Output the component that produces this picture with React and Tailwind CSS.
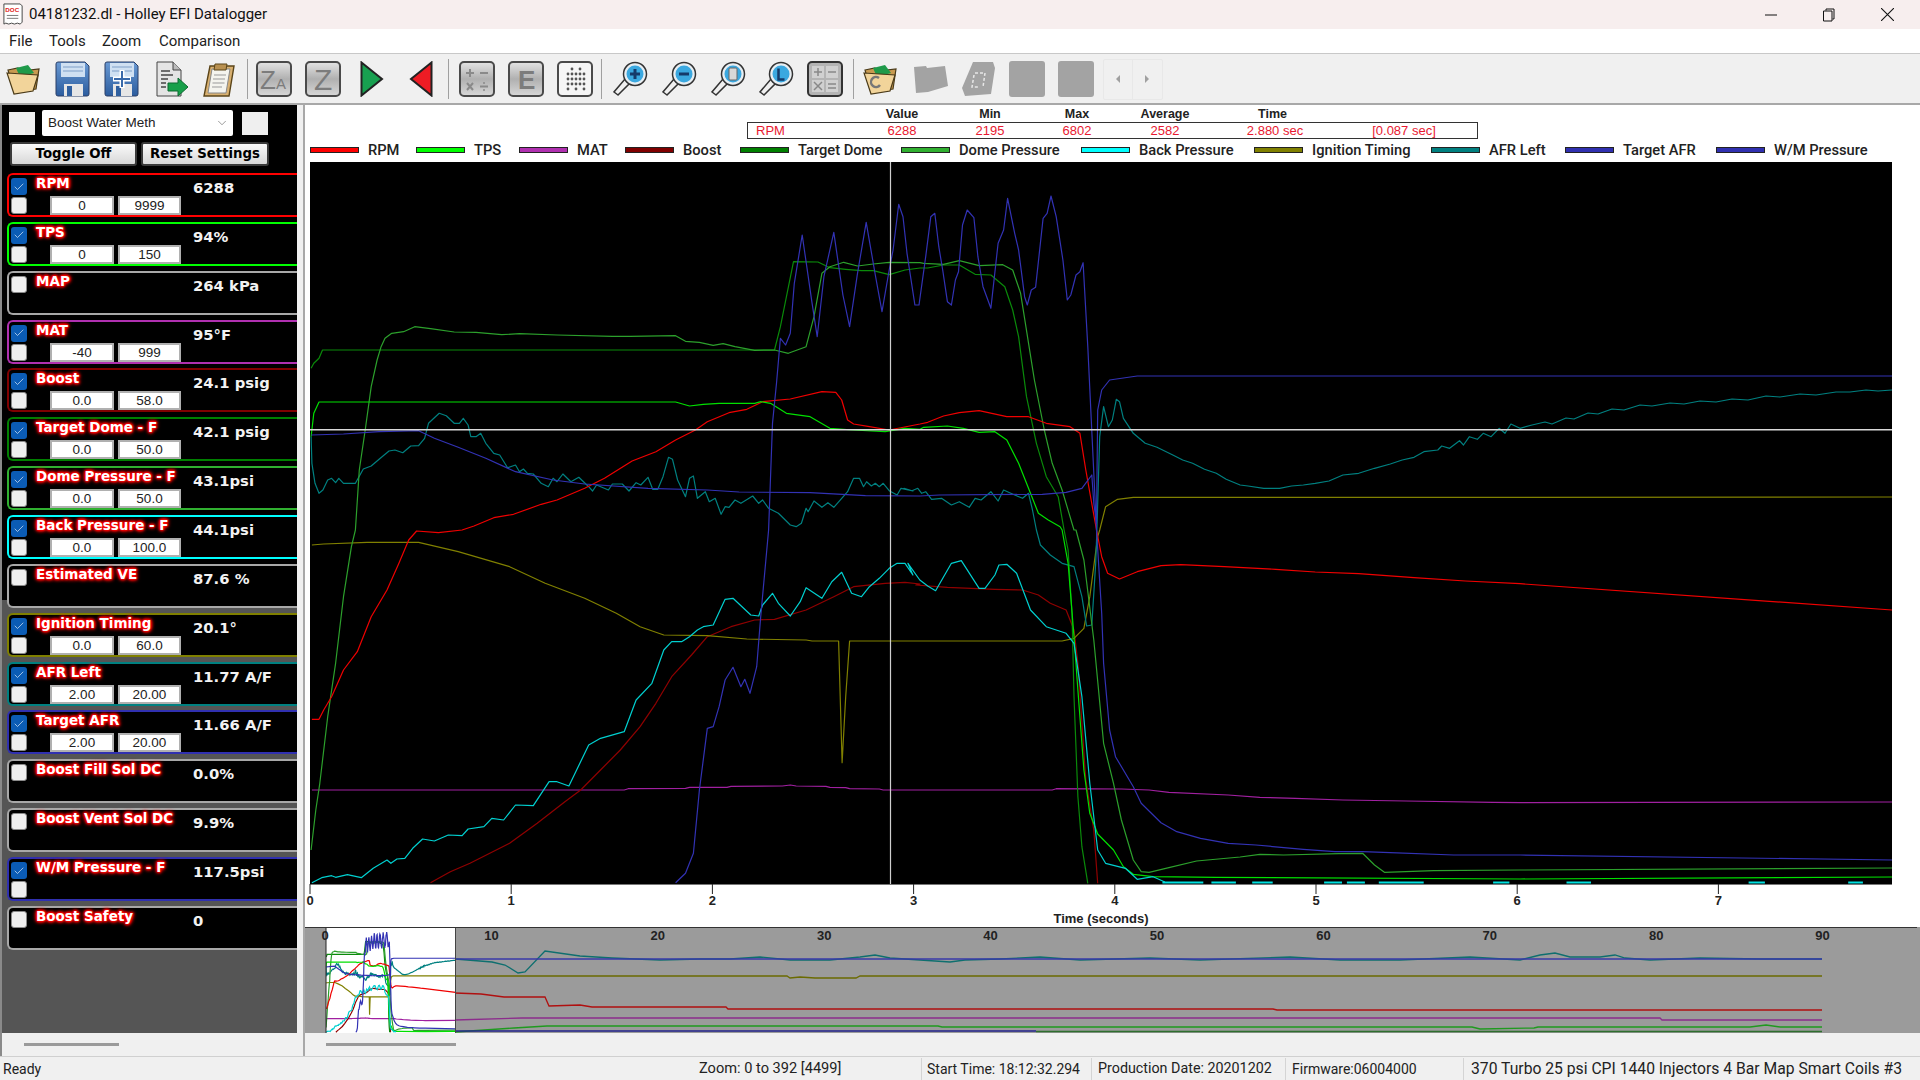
import React from "react";
import { ChevronDown, Check } from "lucide-react";

// zoomed trace coordinates -> page coordinates
const conv = (ox, oy, pts) => pts.map(([x, y]) => [ox + x / 2.529, oy + y / 3]);
const tl = (p) => conv(300, 170, p);
const tr = (p) => conv(900, 170, p);
const bl = (p) => conv(300, 530, p);
const br = (p) => conv(900, 530, p);
const toPts = (arr) => arr.map(([x, y]) => `${x.toFixed(1)},${y.toFixed(1)}`).join(" ");

const domePressure = [
  ...bl([[28,960],[40,840],[50,760],[70,560],[90,400],[110,200],[130,50],[140,0]]),
  ...tl([[150,900],[165,780],[180,650],[195,570],[205,530],[215,505],[232,490],[262,485],[290,470],[330,476],[390,486],[445,487],[510,494],[555,491],[650,495],[790,499],[835,499],[950,497],[975,514],[1010,517],[1045,526],[1070,521],[1100,530],[1150,541],[1200,540],[1235,550],[1280,530],[1300,440],[1320,310],[1340,290],[1375,277],[1410,288],[1450,282],[1490,277],[1568,278]]),
  ...tr([[60,280],[110,283],[150,272],[200,287],[260,284],[285,300],[305,370],[340,630],[365,780],[385,880],[410,960],[440,1080]]),
  ...br([[445,0],[465,90],[490,330],[515,640],[540,760],[560,870],[590,990],[610,1025],[630,1027],[680,1013],[750,993],[860,981],[910,973],[970,975],[1110,971],[1170,970],[1200,1005],[1225,1027],[1350,1022],[1568,1020]]),
  [1892,868],
];
const targetDome = [
  ...tl([[28,595],[35,580],[48,565],[57,540],[1130,540],[1200,540],[1215,470],[1248,275],[1310,276],[1340,293],[1380,298],[1420,302],[1450,302],[1490,314],[1530,300],[1568,294]]),
  ...tr([[70,294],[110,285],[150,285],[190,313],[230,315],[265,350],[285,420],[300,500],[320,680],[345,820],[370,920],[400,980],[415,1080]]),
  ...br([[425,60],[435,250],[440,500],[450,800],[460,950],[475,1060]]),
];
const tps = [
  ...tl([[28,800],[35,730],[48,696],[950,696],[985,708],[1020,703],[1060,700],[1150,700],[1165,695],[1190,700],[1230,730],[1290,740],[1340,775],[1400,780],[1480,785],[1530,775],[1568,778]]),
  ...tr([[60,772],[120,768],[160,775],[200,787],[240,785],[270,810],[300,880],[330,970],[350,1030],[375,1050],[405,1070],[410,1080]]),
  ...br([[425,100],[440,320],[450,480],[465,720],[480,850],[500,912],[540,960],[565,1010],[590,1033],[640,1040],[800,1042],[1568,1047]]),
  [1892,877],
];
const rpm = [
  ...bl([[30,568],[48,568],[60,540],[80,500],[110,420],[145,365],[180,260],[220,180],[250,100],[275,30],[295,3],[350,8],[410,0]]),
  ...tl([[440,1068],[490,1043],[540,1033],[610,1003],[650,990],[720,955],[770,925],[840,873],[900,845],[950,810],[1000,780],[1030,755],[1085,728],[1130,718],[1170,695],[1240,687],[1320,665],[1355,667],[1370,690],[1385,750],[1400,762],[1440,770],[1490,780],[1568,762]]),
  ...tr([[70,757],[110,738],[150,728],[200,722],[270,740],[325,740],[370,760],[430,770],[455,790],[470,900],[497,1080]]),
  ...br([[510,80],[525,130],[555,147],[600,125],[660,107],[710,104],[820,110],[950,118],[1050,126],[1160,131],[1300,143],[1430,153],[1568,161]]),
  [1892,610],
];
const boost = [
  ...bl([[330,1058],[380,1025],[430,1000],[530,940],[600,880],[670,815],[710,780],[760,720],[810,660],[860,590],[900,520],[940,440],[990,375],[1030,320],[1090,290],[1150,270],[1200,268],[1280,240],[1350,200],[1400,170],[1480,160],[1530,157],[1568,162]]),
  ...br([[40,165],[120,172],[240,178],[310,180],[350,195],[380,220],[420,240],[440,300],[450,400],[470,750],[490,900],[500,1060]]),
];
const backPressure = [
  ...bl([[30,1058],[55,1043],[80,1037],[90,1042],[120,1034],[155,1043],[185,1015],[220,990],[230,1000],[245,987],[265,985],[285,955],[310,927],[340,933],[375,915],[410,917],[425,897],[465,890],[485,865],[515,870],[545,825],[590,827],[630,755],[650,755],[680,768],[730,645],[760,625],[820,605],[850,510],[890,460],[920,360],[940,335],[965,335],[985,320],[1005,300],[1020,290],[1045,285],[1075,208],[1095,205],[1140,255],[1160,258],[1170,225],[1195,190],[1210,220],[1240,258],[1265,215],[1280,173],[1320,205],[1345,155],[1370,127],[1395,190],[1420,200],[1440,170],[1465,145],[1490,115],[1510,100],[1530,100],[1550,135]]),
  ...br([[20,100],[50,150],[70,168],[90,182],[130,100],[155,92],[200,175],[215,175],[240,135],[250,105],[270,103],[295,130],[330,240],[370,290],[420,310],[440,340],[460,500],[480,760],[500,960],[520,1000],[570,1015],[600,1048],[640,1040],[670,1056]]),
];
const backDashes = [[640,690],[700,730],[750,775],[838,860],[866,888],[905,960],[1045,1065],[1135,1165],[1358,1378],[1480,1498]].map(
  ([a, b]) => [[640 + a / 1.225, 882.5], [640 + b / 1.225, 882.5]]
);
const mat = [
  ...bl([[30,780],[820,780],[830,776],[975,775],[985,772],[1080,772],[1090,769],[1220,768],[1240,765],[1255,768],[1330,769],[1340,772],[1380,773],[1390,776],[1465,777],[1475,780],[1568,780]]),
  ...br([[385,780],[395,776],[560,777],[630,780],[680,787],[830,795],[910,802],[1000,805],[1120,810],[1280,813],[1500,817],[1568,818]]),
  [1892,802],
];
const wmPressure = [
  ...bl([[950,1058],[975,1030],[995,970],[1010,780],[1030,595],[1045,590],[1060,530],[1075,450],[1095,412],[1115,470],[1125,448],[1138,490],[1155,410],[1165,260],[1185,0]]),
  ...tl([[1195,760],[1205,640],[1215,505],[1228,525],[1240,490],[1250,340],[1270,195],[1295,400],[1308,500],[1325,320],[1350,187],[1373,375],[1390,470],[1410,310],[1432,157],[1455,315],[1472,425],[1490,300],[1500,240],[1514,103],[1525,140],[1535,250],[1555,405]]),
  ...tr([[48,405],[65,260],[78,140],[88,130],[98,230],[108,300],[120,395],[130,405],[140,330],[148,305],[158,165],[170,120],[187,143],[197,260],[210,350],[230,415],[248,220],[262,180],[272,85],[290,190],[300,240],[315,380],[322,405],[332,360],[343,352],[362,145],[372,130],[382,78],[395,140],[412,270],[423,390],[432,375],[445,315],[455,305],[463,278],[475,530],[497,1080]]),
  ...br([[510,250],[515,400],[530,600],[545,680],[590,770],[610,820],[660,878],[700,905],[760,925],[830,940],[900,945],[1020,958],[1100,965],[1170,965],[1240,968],[1400,975],[1568,975]]),
  [1892,860],
];
const targetAfr = [
  ...tl([[28,795],[110,792],[200,785],[300,782],[340,805],[400,832],[470,865],[545,905],[640,930],[720,942],[880,955],[1030,960],[1110,966],[1290,968],[1430,977],[1568,978]]),
  ...tr([[100,975],[360,973],[420,967],[460,955],[485,915],[490,1000],[497,1060],[500,720],[510,660],[530,630],[600,618],[1568,618]]),
  [1892,376],
];
const afrLeft = [
  ...tl([[28,800],[30,880],[38,940],[48,970],[58,960],[70,930],[80,925],[90,938],[98,925],[110,940],[140,940],[160,897],[180,888],[200,868],[225,843],[240,840],[260,848],[280,828],[300,827],[315,805],[325,760],[352,730],[370,737],[390,760],[403,760],[413,745],[425,765],[432,800],[445,800],[457,790],[470,820],[490,850],[505,855],[525,893],[545,885],[555,905],[565,897],[575,910],[590,912],[610,940],[628,950],[640,925],[650,935],[665,912],[685,935],[705,922],[730,950],[740,963],[750,945],[780,960],[790,942],[815,942],[832,963],[850,938],[862,945],[880,922],[892,958],[905,958],[918,920],[932,862],[942,868],[955,930],[975,980],[985,925],[995,918],[1005,985],[1025,965],[1035,995],[1050,985],[1065,1033],[1075,1010],[1085,1012],[1100,990],[1115,1000],[1145,978],[1160,1000],[1170,990],[1185,1015],[1210,1030],[1240,1065],[1255,1070],[1268,1060],[1280,1015],[1285,1025],[1300,993],[1320,1012],[1335,998],[1350,1012],[1370,985],[1385,965],[1400,925],[1415,925],[1425,950],[1433,935],[1445,948],[1455,940],[1465,950],[1475,940],[1490,962],[1510,975],[1520,955],[1550,963]]),
  ...tr([[10,955],[30,962],[45,955],[55,970],[65,965],[80,988],[105,985],[130,1005],[150,995],[175,1012],[190,985],[205,990],[230,965],[248,993],[262,960],[290,975],[310,985],[325,970],[335,1020],[345,1080]]),
  ...br([[355,45],[380,75],[410,100],[440,110],[460,200],[472,288],[485,285],[495,100],[498,0]]),
  ...tr([[505,800],[515,710],[527,770],[537,750],[547,688],[555,695],[565,745],[590,790],[620,820],[650,832],[690,855],[715,870],[740,880],[770,898],[800,910],[825,928],[860,945],[880,948],[920,955],[960,955],[990,948],[1020,945],[1050,940],[1085,933],[1120,915],[1160,910],[1200,895],[1240,882],[1270,870],[1300,862],[1325,845],[1360,840],[1370,828],[1390,835],[1415,812],[1425,825],[1440,800],[1460,808],[1475,790],[1495,800],[1515,775],[1530,790],[1545,762],[1568,775]]),
  [1532,425],[1545,422],[1552,424],[1566,418],[1574,419],[1588,413],[1598,414],[1612,409],[1624,410],[1640,405],[1652,406],[1670,403],[1684,404],[1700,401],[1716,402],[1732,399],[1748,400],[1766,396],[1780,397],[1800,394],[1816,395],[1836,392],[1850,392],[1866,390],[1878,391],[1892,390],
];
const ignition = [
  ...bl([[30,45],[60,42],[170,37],[300,37],[400,65],[530,110],[620,160],[720,205],[800,250],[860,290],[920,315],[1030,317],[1130,327],[1280,330],[1295,333],[1362,333],[1371,698],[1380,500],[1390,333],[1568,333]]),
  ...br([[410,333],[440,325],[465,295],[480,200],[500,20],[505,0]]),
  ...tr([[520,1010],[550,988],[590,982],[1568,982]]),
  [1892,497],
];

const traces = [
  [mat, "#a020a0"],
  [boost, "#900000"],
  [ignition, "#808000"],
  [afrLeft, "#008080"],
  [targetDome, "#0a8a0a"],
  [domePressure, "#2ca02c"],
  [rpm, "#f00000"],
  [tps, "#00e000"],
  [backPressure, "#00d0d0"],
  [targetAfr, "#3232b4"],
  [wmPressure, "#3232b4"],
];

// what the overview shows to the right of the highlighted window
const overviewTraces = [
  [[[455,959],[492,962],[505,965],[518,973],[525,972],[545,951],[580,956],[612,958],[660,960],[700,959],[730,959],[760,957],[790,960],[830,960],[860,957],[875,955],[890,958],[950,962],[965,960],[1000,959],[1040,957],[1080,960],[1150,958],[1200,960],[1290,957],[1340,960],[1400,960],[1470,957],[1520,960],[1540,955],[1555,953],[1570,957],[1600,957],[1615,955],[1625,958],[1650,960],[1700,958],[1760,959],[1822,959]], "#0e6f6f"],
  [[[455,959],[1822,959]], "#3838a8"],
  [[[455,976],[787,976],[790,978],[800,977],[815,978],[856,978],[860,976],[1822,976]], "#6b6b00"],
  [[[455,993],[481,994],[504,997],[545,997],[549,1006],[580,1005],[592,1007],[726,1007],[728,1009],[1273,1009],[1277,1010],[1822,1010]], "#b01010"],
  [[[455,1020],[522,1018],[1660,1018],[1662,1020],[1822,1020]], "#8c2c8c"],
  [[[455,1032],[514,1028],[547,1026],[938,1026],[942,1027],[1472,1027],[1480,1029],[1534,1028],[1538,1027],[1750,1027],[1766,1025],[1780,1027],[1822,1027]], "#1f9a1f"],
  [[[455,1031],[1036,1031]], "#24248c"],
  [[[1036,1031.5],[1822,1031.5]], "#2f6f2f"],
];

const channels = [
  { name: "RPM", value: "6288", color: "border-[#ff0000]", checked: true, min: "0", max: "9999" },
  { name: "TPS", value: "94%", color: "border-[#00ff00]", checked: true, min: "0", max: "150" },
  { name: "MAP", value: "264 kPa", color: "border-[#a8a8a8]" },
  { name: "MAT", value: "95°F", color: "border-[#b030b0]", checked: true, min: "-40", max: "999" },
  { name: "Boost", value: "24.1 psig", color: "border-[#800000]", checked: true, min: "0.0", max: "58.0" },
  { name: "Target Dome - F", value: "42.1 psig", color: "border-[#008000]", checked: true, min: "0.0", max: "50.0" },
  { name: "Dome Pressure - F", value: "43.1psi", color: "border-[#30b030]", checked: true, min: "0.0", max: "50.0" },
  { name: "Back Pressure - F", value: "44.1psi", color: "border-[#00ffff]", checked: true, min: "0.0", max: "100.0" },
  { name: "Estimated VE", value: "87.6 %", color: "border-[#a8a8a8]" },
  { name: "Ignition Timing", value: "20.1°", color: "border-[#808000]", checked: true, min: "0.0", max: "60.0" },
  { name: "AFR Left", value: "11.77 A/F", color: "border-[#008080]", checked: true, min: "2.00", max: "20.00" },
  { name: "Target AFR", value: "11.66 A/F", color: "border-[#3030b0]", checked: true, min: "2.00", max: "20.00" },
  { name: "Boost Fill Sol DC", value: "0.0%", color: "border-[#a8a8a8]" },
  { name: "Boost Vent Sol DC", value: "9.9%", color: "border-[#a8a8a8]" },
  { name: "W/M Pressure - F", value: "117.5psi", color: "border-[#3030b0]", checked: true },
  { name: "Boost Safety", value: "0", color: "border-[#a8a8a8]" },
];

const legend = [
  ["RPM", "bg-[#ff0000]", "w-[106px]"],
  ["TPS", "bg-[#00ff00]", "w-[103px]"],
  ["MAT", "bg-[#b030b0]", "w-[106px]"],
  ["Boost", "bg-[#800000]", "w-[115px]"],
  ["Target Dome", "bg-[#008000]", "w-[161px]"],
  ["Dome Pressure", "bg-[#30b030]", "w-[180px]"],
  ["Back Pressure", "bg-[#00ffff]", "w-[173px]"],
  ["Ignition Timing", "bg-[#808000]", "w-[177px]"],
  ["AFR Left", "bg-[#008080]", "w-[134px]"],
  ["Target AFR", "bg-[#3030b0]", "w-[151px]"],
  ["W/M Pressure", "bg-[#3030b0]", "w-[170px]"],
];

const statCols = "grid grid-cols-[110px_88px_88px_86px_90px_130px_128px_1fr]";

const ticks = [0, 1, 2, 3, 4, 5, 6, 7];
const overviewTicks = [0, 10, 20, 30, 40, 50, 60, 70, 80, 90];

const Box = ({ children }) => (
  <svg viewBox="0 0 36 36" className="w-[36px] h-[36px]">
    {children}
  </svg>
);

const GrayKey = ({ children }) => (
  <Box>
    <rect x="1" y="1" width="34" height="34" rx="4" fill="url(#keyGrad)" stroke="#4a4a4a" strokeWidth="2" />
    {children}
  </Box>
);

const Floppy = ({ plus }) => (
  <Box>
    <path d="M3 1h27l4 4v28a2 2 0 0 1-2 2H3a2 2 0 0 1-2-2V3a2 2 0 0 1 2-2z" fill="url(#blueGrad)" stroke="#2b3f66" />
    <rect x="6" y="2" width="24" height="14" fill="#cfe0f2" />
    <path d="M8 6h20M8 10h20" stroke="#7f9fc8" />
    <rect x="9" y="23" width="19" height="12" fill="#e6e6e6" />
    <rect x="12" y="25" width="5" height="10" fill="#2f5f9f" />
    {plus && <path d="M18 9v18M9 18h18" stroke="#fff" strokeWidth="5" />}
    {plus && <path d="M18 10v16M10 18h16" stroke="#3a6aaa" strokeWidth="2" />}
  </Box>
);

const Magnifier = ({ children }) => (
  <Box>
    <path d="M6 34l-4-3 11-13 5 4z" fill="#f0f0f0" stroke="#333" strokeWidth="1.5" />
    <circle cx="23" cy="13" r="11.5" fill="#e8eef2" stroke="#333" strokeWidth="1.5" />
    <circle cx="23" cy="13" r="8.500" fill="#3aa8e0" />
    {children}
  </Box>
);

const Folder = ({ children }) => (
  <Box>
    <path d="M2 9l10-2 3 3 18-2-3 20-22 3z" fill="#c89a50" stroke="#4a3a18" strokeWidth="1.2" />
    <path d="M10 7l12-3 6 8-14 4z" fill="#1f9a4a" />
    <path d="M1 12l31 2-5 16-19 3z" fill="#f2d49a" stroke="#4a3a18" strokeWidth="1.2" />
    {children}
  </Box>
);

const Checkbox = ({ on }) =>
  on ? (
    <div className="w-[16px] h-[17px] rounded-[3px] bg-[#0b5cb5] flex items-center justify-center">
      <Check size={12} strokeWidth={1.5} className="text-[#cfe2f5]" />
    </div>
  ) : (
    <div className="w-[16px] h-[17px] rounded-[3px] bg-[#efefef] border border-[#8a8a8a]" />
  );

const RangeInput = ({ value, w }) => (
  <div className={`${w} h-[19px] bg-white border-2 border-[#b0b0b0] text-center text-[13.5px] leading-[15px] text-[#222] font-['Liberation_Sans',sans-serif]`}>
    {value}
  </div>
);

const ChannelRow = ({ ch }) => (
  <div className={`h-[44px] bg-black border-y-2 border-l-2 ${ch.color} rounded-l-[6px] flex pl-[2px]`}>
    <div className="w-[16px] pt-[3px] flex flex-col gap-[2px]">
      <Checkbox on={ch.checked} />
      {ch.checked && <Checkbox />}
    </div>
    <div className="w-[166px] pl-[9px]">
      <div className="h-[16px] text-[13.500px] leading-[16px] font-bold text-white whitespace-nowrap font-['DejaVu_Sans',sans-serif] [text-shadow:0_0_2px_#f00,0_0_2px_#f00,0_0_3px_#f00,0_0_3px_#f00,0_0_4px_#f00,0_0_4px_#f00,0_0_5px_#e00]">
        {ch.name}
      </div>
      {ch.min && (
        <div className="flex gap-[4px] mt-[5px] ml-[14px]">
          <RangeInput value={ch.min} w="w-[64px]" />
          <RangeInput value={ch.max} w="w-[63px]" />
        </div>
      )}
    </div>
    <div className="mt-[3px] h-[20px] text-[14.800px] leading-[20px] font-bold text-[#f2f2f2] whitespace-nowrap font-['DejaVu_Sans',sans-serif]">
      {ch.value}
    </div>
  </div>
);

const Sep = ({ className }) => <div className={`w-px h-[40px] bg-[#a0a0a0] ${className}`} />;

const Slot = ({ children }) => <div className="w-[48.8px] flex justify-center">{children}</div>;

const Toolbar = () => (
  <div className="h-[50px] bg-[#f0f0f0] flex items-center border-b-2 border-[#a8a8a8] shrink-0">
    <svg className="w-0 h-0 block">
      <defs>
        <linearGradient id="keyGrad" x1="0" y1="0" x2="0" y2="1">
          <stop offset="0" stopColor="#e4e4e4" />
          <stop offset="0.5" stopColor="#b0b0b0" />
          <stop offset="1" stopColor="#d8d8d8" />
        </linearGradient>
        <linearGradient id="blueGrad" x1="0" y1="0" x2="0" y2="1">
          <stop offset="0" stopColor="#6a9ad4" />
          <stop offset="1" stopColor="#2b5c9e" />
        </linearGradient>
      </defs>
    </svg>
    <Slot>
      <Folder />
    </Slot>
    <Slot>
      <Floppy />
    </Slot>
    <Slot>
      <Floppy plus />
    </Slot>
    <Slot>
      <Box>
        <path d="M4 1h16l8 8v26H4z" fill="#e4e4e4" stroke="#444" />
        <path d="M20 1v8h8" fill="#bbb" stroke="#444" />
        <path d="M8 10h9M8 14h12M8 18h7M8 22h5M8 26h5" stroke="#444" strokeWidth="1.4" />
        <path d="M15 22h10v-5l10 9-10 9v-5H15z" fill="#18a04a" stroke="#0c6a30" />
      </Box>
    </Slot>
    <Slot>
      <Box>
        <path d="M8 5h24l-5 30H2z" fill="#d8b070" stroke="#5a4418" strokeWidth="1.4" />
        <path d="M10 8h18l-4 24H6z" fill="#f4f4ee" stroke="#888" />
        <path d="M12 14h12M11 18h12M10.500 22h12M10 26h10" stroke="#999" />
        <path d="M13 3h12l-1 6H12z" fill="#b89050" stroke="#5a4418" />
      </Box>
    </Slot>
    <Sep className="ml-[3px] mr-[2px]" />
    <Slot>
      <GrayKey>
        <text x="4" y="28" fontSize="26" fontFamily="Liberation Sans" fill="#7c7c7c">Z</text>
        <text x="20" y="28" fontSize="15" fontFamily="Liberation Sans" fill="#7c7c7c">A</text>
      </GrayKey>
    </Slot>
    <Slot>
      <GrayKey>
        <text x="9" y="29" fontSize="30" fontFamily="Liberation Sans" fill="#7c7c7c">Z</text>
      </GrayKey>
    </Slot>
    <Slot>
      <svg viewBox="0 0 24 36" className="w-[24px] h-[36px]">
        <path d="M1.500 1.500L22 18 1.500 34.500z" fill="#18a050" stroke="#222" strokeWidth="2" />
      </svg>
    </Slot>
    <Slot>
      <svg viewBox="0 0 24 36" className="w-[24px] h-[36px]">
        <path d="M22.500 1.500L2 18l20.500 16.500z" fill="#ee1c24" stroke="#222" strokeWidth="2" />
      </svg>
    </Slot>
    <Sep className="ml-[3px] mr-[3.800px]" />
    <Slot>
      <GrayKey>
        <path d="M11 8v8M7 12h8M21 12h8M8 22l6 7M14 22l-6 7M21 25.500h8" stroke="#8a8a8a" strokeWidth="2" fill="none" />
        <circle cx="25" cy="22" r="1" fill="#8a8a8a" />
        <circle cx="25" cy="29" r="1" fill="#8a8a8a" />
      </GrayKey>
    </Slot>
    <Slot>
      <GrayKey>
        <text x="10" y="28" fontSize="26" fontWeight="bold" fontFamily="Liberation Sans" fill="#7c7c7c">E</text>
      </GrayKey>
    </Slot>
    <Slot>
      <Box>
        <rect x="1" y="1" width="34" height="34" rx="4" fill="#f6f6f6" stroke="#4a4a4a" strokeWidth="2" />
        {[8, 13, 18, 23, 28].map((y) =>
          [11, 15, 19, 23, 27].map((x) =>
            (x + y) % 8 !== 3 ? <circle key={`${x}-${y}`} cx={x} cy={y} r="1.400" fill="#555" /> : null
          )
        )}
      </Box>
    </Slot>
    <Sep className="ml-[2px] mr-[3.200px]" />
    <Slot>
      <Magnifier>
        <path d="M23 8v10M18 13h10" stroke="#153a6a" strokeWidth="3" />
      </Magnifier>
    </Slot>
    <Slot>
      <Magnifier>
        <path d="M18 13h10" stroke="#153a6a" strokeWidth="3" />
      </Magnifier>
    </Slot>
    <Slot>
      <Magnifier>
        <rect x="19" y="7" width="8" height="12" rx="1" fill="#d8d8d8" stroke="#666" />
      </Magnifier>
    </Slot>
    <Slot>
      <Magnifier>
        <path d="M20.500 7.500v11h6" stroke="#153a6a" strokeWidth="2.500" fill="none" />
      </Magnifier>
    </Slot>
    <Slot>
      <Box>
        <rect x="1" y="1" width="34" height="34" rx="4" fill="#b4b4b4" stroke="#333" strokeWidth="2" />
        <rect x="5" y="5" width="12" height="12" fill="#d0d0d0" />
        <rect x="19" y="5" width="12" height="12" fill="#d0d0d0" />
        <rect x="5" y="19" width="12" height="12" fill="#d0d0d0" />
        <rect x="19" y="19" width="12" height="12" fill="#d0d0d0" />
        <path d="M11 7v8M7 11h8M21 11h8M7 21l8 8M15 21l-8 8M21 23h8M21 27h8" stroke="#888" strokeWidth="1.500" />
      </Box>
    </Slot>
    <Sep className="ml-[3.400px] mr-[2.600px]" />
    <Slot>
      <Folder>
        <path d="M16 17a5 5 0 1 0 1 7" stroke="#777" strokeWidth="2.500" fill="none" />
      </Folder>
    </Slot>
    <Slot>
      <Box>
        <path d="M2 6l12-1 1 2 18-2 3 20-20 6-12 1z" fill="#a3a3a3" />
      </Box>
    </Slot>
    <Slot>
      <Box>
        <path d="M12 1h20l2 6-4 26-26 2-3-8z" fill="#a3a3a3" />
        <path d="M14 12h10l-2 14" stroke="#e8e8e8" strokeWidth="1.500" strokeDasharray="3 2" fill="none" />
        <path d="M13 14l-2 12h6" stroke="#e8e8e8" strokeWidth="1.500" strokeDasharray="3 2" fill="none" />
      </Box>
    </Slot>
    <Slot>
      <div className="w-[36px] h-[36px] rounded-[3px] bg-[#a3a3a3]" />
    </Slot>
    <Slot>
      <div className="w-[36px] h-[36px] rounded-[3px] bg-[#a3a3a3]" />
    </Slot>
    <div className="ml-[2px] flex h-[41px] border border-[#e8e8e8] rounded-[2px]">
      <div className="w-[29px] flex items-center justify-center border-r border-[#e8e8e8]">
        <div className="w-0 h-0 border-y-[4px] border-y-transparent border-r-[4px] border-r-[#a0a0a0]" />
      </div>
      <div className="w-[29px] flex items-center justify-center">
        <div className="w-0 h-0 border-y-[4px] border-y-transparent border-l-[4px] border-l-[#a0a0a0]" />
      </div>
    </div>
  </div>
);

const MainChart = () => (
  <svg viewBox="305 162 1614 765" className="block w-[1614px] h-[765px]">
    <defs>
      <clipPath id="plotClip">
        <rect x="310" y="162" width="1582" height="722" />
      </clipPath>
    </defs>
    <rect x="310" y="162" width="1582" height="722" fill="#000" />
    <g clipPath="url(#plotClip)" fill="none" strokeWidth="1.200" strokeLinejoin="round">
      {traces.map(([t, c], i) => (
        <polyline key={i} points={toPts(t)} stroke={c} />
      ))}
      {backDashes.map((d, i) => (
        <polyline key={i} points={toPts(d)} stroke="#00e0e0" strokeWidth="2" />
      ))}
      <line x1="890.500" y1="162" x2="890.500" y2="884" stroke="#cfcfcf" />
      <line x1="310" y1="429.700" x2="1892" y2="429.700" stroke="#d8d8d8" strokeWidth="1.400" />
    </g>
    <line x1="310" y1="884.500" x2="1892" y2="884.500" stroke="#777" />
    {ticks.map((t) => (
      <g key={t}>
        <line x1={310 + t * 201.2} y1="884" x2={310 + t * 201.2} y2="894" stroke="#222" />
        <text x={310 + t * 201.2} y="905" textAnchor="middle" fontSize="13" fontWeight="bold" fill="#222" fontFamily="Liberation Sans">
          {t}
        </text>
      </g>
    ))}
    <text x="1101" y="923" textAnchor="middle" fontSize="13" fontWeight="bold" fill="#222" fontFamily="Liberation Sans">
      Time (seconds)
    </text>
  </svg>
);

const Overview = () => (
  <svg viewBox="305 927 1612 106" className="block w-[1612px] h-[106px] bg-[#9b9b9b]">
    <defs>
      <clipPath id="miniClip">
        <rect x="326" y="927" width="129.500" height="106" />
      </clipPath>
    </defs>
    <rect x="326" y="927" width="129.500" height="106" fill="#fff" />
    <g clipPath="url(#miniClip)">
      <g transform="translate(326 927) scale(0.0819 0.146) translate(-310 -162)" fill="none">
        {traces.map(([t, c], i) => (
          <polyline key={i} points={toPts(t)} stroke={c} strokeWidth="1.200" vectorEffect="non-scaling-stroke" />
        ))}
      </g>
    </g>
    <g fill="none" strokeWidth="1.300">
      {overviewTraces.map(([t, c], i) => (
        <polyline key={i} points={toPts(t)} stroke={c} />
      ))}
    </g>
    <line x1="326" y1="927" x2="326" y2="1033" stroke="#222" />
    <line x1="455.500" y1="927" x2="455.500" y2="1033" stroke="#444" />
    <line x1="305" y1="927.500" x2="1917" y2="927.500" stroke="#333" />
    {overviewTicks.map((t) => (
      <text key={t} x={325 + t * 16.64} y="940" textAnchor="middle" fontSize="13" fontWeight="bold" fill="#222" fontFamily="Liberation Sans">
        {t}
      </text>
    ))}
  </svg>
);

const App = () => {
  return (
    <div className="w-[1920px] h-[1080px] flex flex-col overflow-hidden bg-[#f0f0f0] font-['Liberation_Sans',sans-serif]">
      {/* title bar */}
      <div className="h-[29px] shrink-0 bg-[#f7eeee] flex items-center pl-[2px]">
        <svg viewBox="0 0 24 24" className="w-[23px] h-[23px]">
          <path d="M2 1h17l2 2v17l-2 2-3-1-3 1-3-1-3 1-3-1-2 1z" fill="#fff" stroke="#444" />
          <text x="3.500" y="9" fontSize="6.500" fontWeight="bold" fill="#e02020" fontFamily="Liberation Sans">DOC</text>
          <path d="M5 13h12M5 16h12" stroke="#777" />
        </svg>
        <div className="ml-[4px] text-[15px] text-[#111] font-['Roboto',sans-serif]">04181232.dl - Holley EFI Datalogger</div>
        <div className="ml-auto flex items-center pr-[26px]">
          <svg viewBox="0 0 12 12" className="w-[12px] h-[12px] mr-[46px]">
            <path d="M0 6h12" stroke="#111" />
          </svg>
          <svg viewBox="0 0 12 14" className="w-[12px] h-[14px] mr-[46px]">
            <path d="M3 2.500V1h8v10H9.500M0.500 3h8.500v10H0.500z" fill="none" stroke="#111" />
          </svg>
          <svg viewBox="0 0 12 12" className="w-[13px] h-[13px]">
            <path d="M0 0l12 12M12 0L0 12" stroke="#111" />
          </svg>
        </div>
      </div>

      {/* menu */}
      <div className="h-[25px] shrink-0 bg-white border-b border-[#c8c8c8] flex items-center pl-[9px] text-[15px] text-[#222] font-['Roboto',sans-serif]">
        <span className="w-[40px]">File</span>
        <span className="w-[53px]">Tools</span>
        <span className="w-[57px]">Zoom</span>
        <span>Comparison</span>
      </div>
      <div className="h-[1px] shrink-0" />

      <Toolbar />

      {/* main area */}
      <div className="flex flex-1 min-h-0">
        <div className="w-[297px] shrink-0 border-l-2 border-[#8a8a8a] flex flex-col">
          <div className="bg-[linear-gradient(#000_0,#000_495px,#555_495px)] h-[845px] shrink-0 pl-[5px]">
            <div className="flex items-center h-[36px] -ml-[5px] pl-[7px]">
              <div className="w-[26px] h-[23px] bg-[#efefef]" />
              <div className="ml-[7px] w-[191px] h-[26px] bg-white rounded-[2px] flex items-center justify-between pl-[6px] pr-[4px] text-[13.500px] text-[#222]">
                Boost Water Meth
                <ChevronDown size={14} strokeWidth={1} className="text-[#555]" />
              </div>
              <div className="ml-[9px] w-[26px] h-[23px] bg-[#efefef]" />
            </div>
            <div className="flex gap-[4px] h-[32px] pl-[3px] pt-[1px]">
              <div className="w-[127px] h-[24px] bg-gradient-to-b from-[#fafafa] to-[#d8d8d8] border-2 border-[#3a3a3a] rounded-[3px] text-center text-[13.300px] leading-[20px] font-bold text-black font-['DejaVu_Sans',sans-serif]">
                Toggle Off
              </div>
              <div className="w-[128px] h-[24px] bg-gradient-to-b from-[#fafafa] to-[#d8d8d8] border-2 border-[#3a3a3a] rounded-[3px] text-center text-[13.300px] leading-[20px] font-bold text-black font-['DejaVu_Sans',sans-serif] whitespace-nowrap">
                Reset Settings
              </div>
            </div>
            <div className="flex flex-col gap-[4.870px]">
              {channels.map((ch) => (
                <ChannelRow key={ch.name} ch={ch} />
              ))}
            </div>
          </div>
          <div className="flex-1 bg-[#555555]" />
          <div className="h-[23px] shrink-0 bg-[#f0f0f0] flex items-center pl-[22px]">
            <div className="w-[95px] h-[3px] bg-[#9a9a9a]" />
          </div>
        </div>

        {/* splitter */}
        <div className="w-[8px] shrink-0 bg-[#f0f0f0] border-r-2 border-[#a8a8a8]" />

        <div className="flex-1 min-w-0 flex flex-col">
          <div className="h-[57px] shrink-0 bg-white font-['Liberation_Sans',sans-serif]">
            <div className={`${statCols} ml-[443px] w-[731px] h-[17px] pb-[2px] items-center text-center text-[12.500px] font-bold text-[#222]`}>
              <span />
              <span>Value</span>
              <span>Min</span>
              <span>Max</span>
              <span>Average</span>
              <span className="pr-[5px]">Time</span>
            </div>
            <div className={`${statCols} ml-[442px] w-[731px] h-[17px] pb-[1px] border border-[#333] items-center text-center text-[13px] leading-[15px] text-[#e81830]`}>
              <span className="text-left pl-[8px]">RPM</span>
              <span>6288</span>
              <span>2195</span>
              <span>6802</span>
              <span>2582</span>
              <span>2.880 sec</span>
              <span>[0.087 sec]</span>
            </div>
            <div className="flex items-center h-[23px] pl-[5px] text-[14.700px] font-medium text-[#222] font-['Roboto',sans-serif]">
              {legend.map(([name, swatch, w]) => (
                <div key={name} className={`${w} flex items-center shrink-0`}>
                  <div className={`w-[49px] h-[6px] shrink-0 ${swatch} border border-[#222]`} />
                  <span className="ml-[9px] whitespace-nowrap">{name}</span>
                </div>
              ))}
            </div>
          </div>
          <div className="bg-white shrink-0">
            <MainChart />
          </div>
          <div className="bg-[#9b9b9b] shrink-0">
            <Overview />
          </div>
          <div className="h-[23px] shrink-0 bg-[#f0f0f0] flex items-center pl-[21px]">
            <div className="w-[130px] h-[3px] bg-[#9a9a9a]" />
          </div>
        </div>
      </div>

      {/* status bar */}
      <div className="h-[24px] shrink-0 pt-[1px] border-t border-[#d0d0d0] flex items-center text-[14px] text-[#222] font-['Roboto',sans-serif] whitespace-nowrap">
        <div className="w-[699px] pl-[3px]">Ready</div>
        <div className="w-[223px] h-full flex items-center border-r border-[#d4d4d4] text-[14.600px]">Zoom: 0 to 392 [4499]</div>
        <div className="w-[170px] pl-[5px] h-full flex items-center border-r border-[#d4d4d4]">Start Time: 18:12:32.294</div>
        <div className="w-[194px] pl-[6px] h-full flex items-center border-r border-[#d4d4d4] text-[14.300px]">Production Date: 20201202</div>
        <div className="w-[178px] pl-[6px] h-full flex items-center border-r border-[#d4d4d4]">Firmware:06004000</div>
        <div className="pl-[7px] text-[15.700px]">370 Turbo 25 psi CPI 1440 Injectors 4 Bar Map Smart Coils #3</div>
      </div>
    </div>
  );
};

export default App;
